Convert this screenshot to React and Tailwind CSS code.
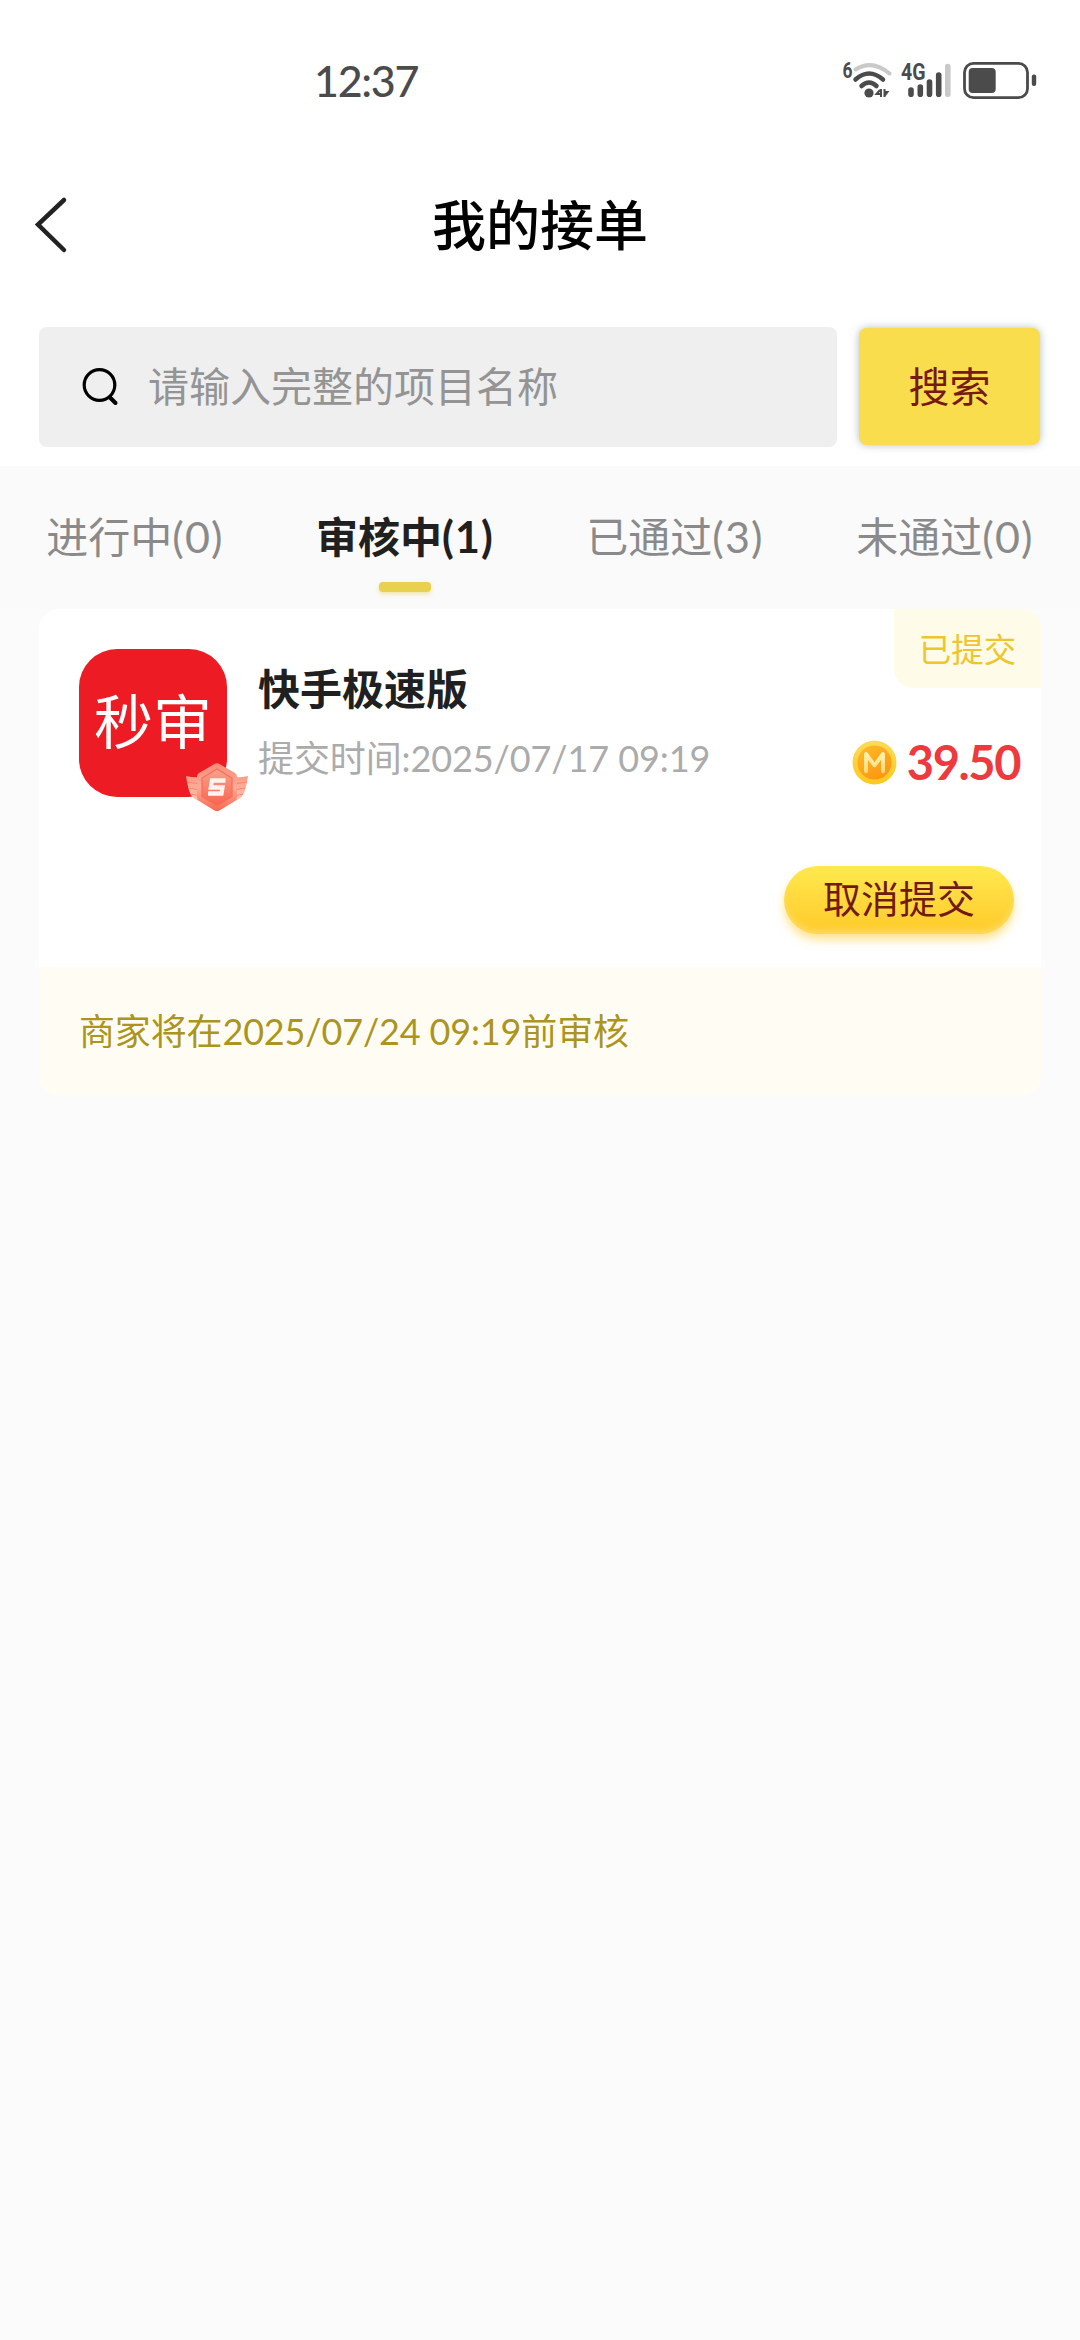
const tabs = [
  { label: '进行中', count: 0, active: false },
  { label: '审核中', count: 1, active: true },
  { label: '已通过', count: 3, active: false },
  { label: '未通过', count: 0, active: false },
];

function StatusIcons() {
  return (
    <svg className="h-[48px] w-[200px] font-[Roboto,sans-serif]" viewBox="840 57 200 48" fill="none">
      <text x="842.5" y="78" fontSize="22" fontWeight="700" fill="#4b4b4b" textLength="10" lengthAdjust="spacingAndGlyphs">6</text>
      <g strokeLinecap="round" strokeWidth="4">
        <path d="M855.5 69.5Q872 59 889.5 73.5" stroke="#c9c9c9" />
        <path d="M855.5 79.5Q869 67.500 883 79.500" stroke="#4b4b4b" strokeWidth="4.500" />
        <path d="M861.500 86Q869 79 876.500 86" stroke="#4b4b4b" strokeWidth="4.500" />
      </g>
      <circle cx="869" cy="93" r="4.600" fill="#4b4b4b" />
      <path d="M881 89V97M880 90L876.500 94H881M884.500 89V97M884.500 96L887.500 92H884" stroke="#4b4b4b" strokeWidth="2" />
      <text x="901" y="80" fontSize="23" fontWeight="700" fill="#4b4b4b" textLength="24.500" lengthAdjust="spacingAndGlyphs">4G</text>
      <g strokeWidth="5.600" strokeLinecap="round" stroke="#4b4b4b">
        <path d="M911 90V94.300M920.300 87V94.300M929.500 82V94.300M938.700 75V94.300" />
        <path d="M947.800 66.500V94.300" stroke="#c9c9c9" />
      </g>
      <rect x="964.500" y="63.300" width="63" height="34.400" rx="9" stroke="#4b4b4b" strokeWidth="2.800" />
      <rect x="968.700" y="68" width="27" height="25" rx="4" fill="#4b4b4b" />
      <rect x="1031.800" y="74.500" width="4.400" height="11.500" rx="2" fill="#4b4b4b" />
    </svg>
  );
}

function Emblem() {
  return (
    <svg className="absolute left-[107px] top-[114px] h-[49px] w-[62px]" viewBox="0 0 62 49">
      <defs>
        <linearGradient id="hex" x1="0" y1="0" x2="0" y2="1">
          <stop offset="0" stopColor="#f98b78" />
          <stop offset="0.500" stopColor="#fcab98" />
          <stop offset="1" stopColor="#f9674d" />
        </linearGradient>
        <linearGradient id="core" x1="0" y1="0" x2="0" y2="1">
          <stop offset="0" stopColor="#fba28c" />
          <stop offset="1" stopColor="#f9624d" />
        </linearGradient>
        <linearGradient id="wing" x1="0" y1="0" x2="0" y2="1">
          <stop offset="0" stopColor="#fb9c86" />
          <stop offset="1" stopColor="#fdc2ac" />
        </linearGradient>
      </defs>
      <path d="M0 13Q8 15 15 14V38Q8 37 5 32Q2 27 0 13ZM62 13Q54 15 47 14V38Q54 37 57 32Q60 27 62 13Z" fill="url(#wing)" />
      <path d="M1 19L14 21M3 25L14 27M5 31L14 33M61 19L48 21M59 25L48 27M57 31L48 33" stroke="#f88671" strokeWidth="1" />
      <path d="M28.500 1Q31 -0.500 33.500 1L49 10Q51 11 51 14V34Q51 37 49 38L33.500 47.500Q31 49 28.500 47.500L13 38Q11 37 11 34V14Q11 11 13 10Z" fill="url(#hex)" />
      <path d="M31 6L46 15V33.500L31 43L16 33.500V15Z" fill="url(#core)" stroke="#f4705c" strokeWidth="1.300" />
      <path d="M39.500 17.500H26L24.800 24.500H36.500L35.500 30.500H22" fill="none" stroke="#fff3ee" strokeWidth="4.300" />
    </svg>
  );
}

function Coin() {
  return (
    <svg className="h-[45px] w-[45px] shrink-0" viewBox="0 0 46 46">
      <defs>
        <linearGradient id="rim" x1="0" y1="0" x2="0" y2="1">
          <stop offset="0" stopColor="#fcdc55" />
          <stop offset="1" stopColor="#fcc921" />
        </linearGradient>
        <linearGradient id="face" x1="0" y1="0" x2="0.600" y2="1">
          <stop offset="0" stopColor="#fcbc2c" />
          <stop offset="1" stopColor="#fd9710" />
        </linearGradient>
        <linearGradient id="mark" x1="0" y1="0" x2="0" y2="1">
          <stop offset="0" stopColor="#fff1ac" />
          <stop offset="1" stopColor="#fedc7b" />
        </linearGradient>
      </defs>
      <circle cx="23" cy="23" r="22.500" fill="url(#rim)" />
      <circle cx="23" cy="23" r="17.500" fill="url(#face)" />
      <path d="M14.300 32V14.300L23 26L31.700 14.300V32" fill="none" stroke="url(#mark)" strokeWidth="4" strokeLinecap="round" strokeLinejoin="round" />
    </svg>
  );
}

export default function App() {
  return (
    <div className="flex h-[2340px] w-[1080px] flex-col overflow-hidden whitespace-nowrap bg-[#fbfbfb] font-[Lato,'Noto_Sans_CJK_SC',sans-serif]">
      <div className="bg-white">
        <div className="flex h-[162px] items-start justify-between pl-[314px] pr-[40px] pt-[57px]">
          <span className="text-[43px] font-medium leading-[48px] tracking-[-1.3px] text-[#4b4b4b]">12:37</span>
          <StatusIcons />
        </div>
        <header className="grid h-[126px] grid-cols-[1fr_auto_1fr] items-center px-[34px]">
          <svg className="h-[58px] w-[34px]" viewBox="0 0 34 58" fill="none">
            <path d="M30 4L4 28.500L30 54" stroke="#222222" strokeWidth="4.500" strokeLinecap="round" />
          </svg>
          <h1 className="pt-[2px] text-[54px] font-medium leading-[60px] text-black">我的接单</h1>
        </header>
        <div className="flex h-[178px] gap-[22px] pl-[39px] pr-[40px] pt-[39px]">
          <div className="flex h-[120px] flex-1 items-center rounded-[8px] bg-[#efefef] pl-[43px]">
            <svg className="h-[40px] w-[40px]" viewBox="0 0 40 40" fill="none" stroke="#000000">
              <circle cx="17.500" cy="18" r="15.300" strokeWidth="3.200" />
              <path d="M28 30.500L33.500 36" strokeWidth="4" strokeLinecap="round" />
            </svg>
            <span className="ml-[26px] text-[41px] leading-[60px] text-[#949494]">请输入完整的项目名称</span>
          </div>
          <button className="mt-px h-[117px] w-[181px] rounded-[8px] bg-[#f9dd4c] text-[41px] leading-[60px] text-[#771914] shadow-[0_0_9px_rgba(70,90,90,0.4)]">
            搜索
          </button>
        </div>
      </div>

      <nav className="grid h-[143px] grid-cols-4 bg-[#fafafa]">
        {tabs.map((tab) => (
          <div key={tab.label} className="flex flex-col items-center pt-[41px]">
            <span className={tab.active ? 'text-[42px] font-bold leading-[60px] text-[#202020]' : 'text-[42px] leading-[60px] text-[#8a8a8a]'}>
              {tab.label}
              <span className="text-[43px] tracking-[1.2px]">({tab.count})</span>
            </span>
            {tab.active && <span className="mt-[15px] h-[10px] w-[52px] rounded-[4px] bg-[#e9d04f] shadow-[0_2px_4px_rgba(233,208,79,0.5)]" />}
          </div>
        ))}
      </nav>

      <main className="px-[39px]">
        <article className="relative overflow-hidden rounded-[20px] bg-white">
          <span className="absolute right-0 top-0 flex h-[79px] w-[147px] items-center justify-center rounded-bl-[20px] bg-[#fffbe9] pt-[3px] text-[32.500px] text-[#efc52d]">
            已提交
          </span>
          <div className="flex h-[257px] pl-[40px] pr-[21px] pt-[40px]">
            <div className="relative flex h-[148px] w-[148px] items-center justify-center rounded-[38px] bg-[#ed1c24] pb-[2px] text-[59px] leading-[60px] text-white">
              秒审
              <Emblem />
            </div>
            <div className="ml-[31px] flex-1">
              <h2 className="mt-[10px] text-[42px] font-bold leading-[60px] text-[#202020]">快手极速版</h2>
              <p className="mt-[14px] text-[36px] leading-[50px] tracking-[-0.1px] text-[#ababab]">提交时间:2025/07/17 09:19</p>
            </div>
            <div className="mt-[90px] flex h-[46px] items-center gap-[10px]">
              <Coin />
              <span className="text-[47px] font-bold leading-[50px] tracking-[-1.4px] text-[#ee3a3f]">39.50</span>
            </div>
          </div>
          <div className="flex h-[101px] justify-end pr-[27px]">
            <button className="h-[68px] w-[230px] rounded-full bg-linear-to-b from-[#ffe94d] to-[#ffc928] pb-[4px] text-[38px] leading-[60px] text-[#701a12] shadow-[0_6px_10px_rgba(255,205,60,0.55),inset_0_-4px_6px_rgba(255,222,110,0.8)]">
              取消提交
            </button>
          </div>
          <footer className="flex h-[128px] items-center bg-[#fffdf3] pl-[40px] text-[36px] leading-[50px] tracking-[-0.15px] text-[#ab951e]">
            商家将在2025/07/24 09:19前审核
          </footer>
        </article>
      </main>
    </div>
  );
}
